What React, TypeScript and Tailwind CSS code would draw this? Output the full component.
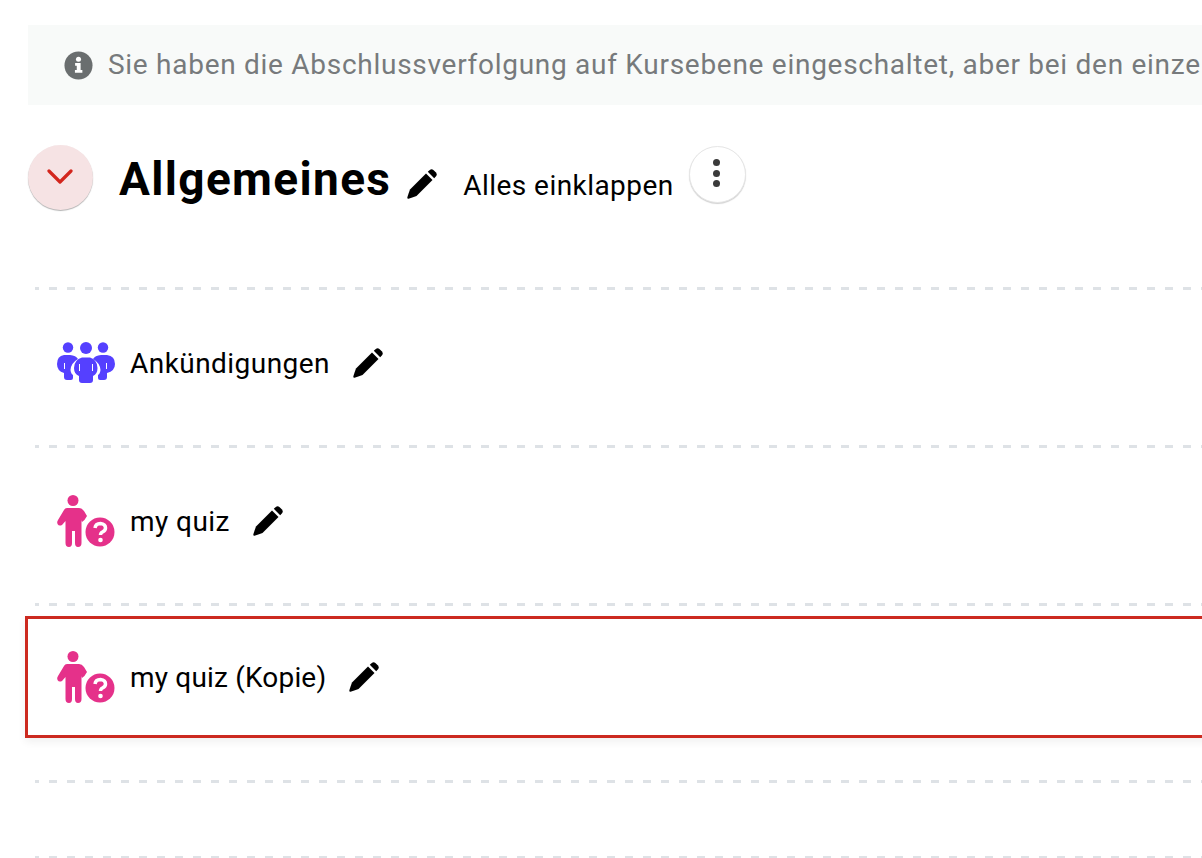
const Pencil = ({ className = "" }: { className?: string }) => (
    <svg viewBox="0 0 30 30" className={`w-[30px] h-[30px] shrink-0 ${className}`} fill="#000">
        <path d="M19 4.500 L25.500 11 L9.500 27 Q5 28.800 1.500 29.800 Q0.200 30 0.300 28.600 Q1.400 24.800 3 20.500 Z" />
        <path d="M20.800 2.800 L22.800 1 Q24.600 -0.300 26.400 1 L29 3.600 Q30.400 5.400 29 7.200 L27.200 9.200 Z" />
    </svg>
)

const GroupIcon = () => (
    <svg viewBox="0 0 60 44" className="w-[60px] h-[44px] shrink-0" fill="#5540ff">
        <circle cx="12" cy="5.500" r="5.200" />
        <circle cx="30" cy="6" r="6" />
        <circle cx="47" cy="5.500" r="5.200" />
        <path d="M8 13 H14 Q20 13.500 22 17 Q15 21 14.500 28 Q15 32 17 33 V36 Q17 38 15 38 H11 Q8 38 8 35 V31 Q1 29 1 22 Q1 14 8 13 Z" />
        <path d="M51 13 H45 Q39 13.500 37 17 Q44 21 44.500 28 Q44 32 42 33 V36 Q42 38 44 38 H48 Q51 38 51 35 V31 Q59 29 59 22 Q59 14 51 13 Z" />
        <path d="M26 15.500 H34 Q41.500 18 41.500 26 Q41.500 32 37 34 V38 Q37 41 34 41 H26 Q23 41 23 38 V34 Q18 32 18 26 Q18 18 26 15.500 Z" />
        <path d="M8.500 21 V27 M23.500 22 V29 M36.500 22 V29 M50.500 21 V27" stroke="#fff" strokeWidth="1" fill="none" />
    </svg>
)

const QuizIcon = () => (
    <svg viewBox="0 0 60 54" className="w-[60px] h-[54px] shrink-0" fill="#e5318a">
        <circle cx="17" cy="5.500" r="5.500" />
        <path d="M11 13 H23 Q26 13 28 16 L31 21 Q29 25 26 27 L25.500 25 V48 Q25.500 52 22 52 Q19 52 19 48 V36 H16 V48 Q16 52 13 52 Q9.500 52 9.500 48 V26 L6 30 Q3 31.500 1.500 29 Q0.500 27 2 25 L8 15 Q9 13 11 13 Z" />
        <circle cx="44" cy="37" r="14.500" />
        <path d="M39 33 Q39.500 28.500 44.500 28.500 Q49.500 29 49.500 33 Q49.500 35.500 46.500 37 Q44.500 38 44.500 40" fill="none" stroke="#fff" strokeWidth="3.500" />
        <circle cx="44.500" cy="45" r="2.300" fill="#fff" />
    </svg>
)

const Dashes = () => (
    <div className="h-[3px] ml-[7px] bg-[repeating-linear-gradient(90deg,#dee2e6_0_4px,transparent_4px_14px,#dee2e6_14px_18px)]" />
)

const App = () => {
    return (
        <div className="w-[1202px] h-[858px] overflow-hidden bg-white pt-[25px] pl-[28px] font-['Roboto',sans-serif] text-[#000]">
            <div className="h-[80px] bg-[#f8faf9] flex items-center pl-[36px] whitespace-nowrap overflow-hidden text-[28px] tracking-[0.72px] text-[#777a7c]">
                <svg viewBox="0 0 30 30" className="w-[29px] h-[29px] mr-[15px] shrink-0">
                    <circle cx="15" cy="15" r="14.500" fill="#6a6e6f" />
                    <circle cx="15" cy="8.500" r="2.600" fill="#fff" />
                    <path d="M11.500 12.500 H17.200 V19.700 H19 V22.500 H11.300 V19.700 H13.200 V15.300 H11.500 Z" fill="#fff" />
                </svg>
                <span>Sie haben die Abschlussverfolgung auf Kursebene eingeschaltet, aber bei den einzel</span>
            </div>

            <div className="mt-[40px] h-[65px] flex items-start">
                <button className="w-[65px] h-[65px] rounded-full bg-[#f6e3e4] shadow-[0_1px_1px_rgba(0,0,0,0.3)] flex items-center justify-center shrink-0">
                    <svg viewBox="0 0 26 16" className="w-[26px] h-[16px] -mt-[1px] -ml-[1px]" fill="none" stroke="#d3261d" strokeWidth="3.200" strokeLinecap="round" strokeLinejoin="round">
                        <path d="M2 2 L13 13 L24 2" />
                    </svg>
                </button>
                <h2 className="ml-[26px] text-[46px] leading-[68px] font-bold tracking-[1.35px]">Allgemeines</h2>
                <Pencil className="ml-[16px] mt-[24px]" />
                <span className="ml-[26px] mt-[21px] text-[28px] leading-[40px] tracking-[0.44px]">Alles einklappen</span>
                <button className="ml-[15px] mt-px w-[57px] h-[57px] rounded-full bg-white border border-[#e6e6e6] shadow-[0_1px_1px_rgba(0,0,0,0.18)] flex flex-col items-center justify-center gap-[3.5px] pb-[3px] pr-[2px] shrink-0">
                    <span className="w-[7px] h-[7px] rounded-full bg-[#3a3a3a]" />
                    <span className="w-[7px] h-[7px] rounded-full bg-[#3a3a3a]" />
                    <span className="w-[7px] h-[7px] rounded-full bg-[#3a3a3a]" />
                </button>
            </div>

            <div className="mt-[77px]">
                <Dashes />
                <div className="h-[155px] flex items-center pl-[28px] pb-[8px] text-[28px] tracking-[0.45px]">
                    <GroupIcon />
                    <span className="ml-[14px]">Ankündigungen</span>
                    <Pencil className="ml-[23px] -mt-[1px]" />
                </div>
                <Dashes />
                <div className="h-[155px] flex items-center pl-[28px] pb-[8px] text-[28px] tracking-[0.45px]">
                    <QuizIcon />
                    <span className="ml-[14px]">my quiz</span>
                    <Pencil className="ml-[23px] -mt-[1px]" />
                </div>
                <Dashes />
                <div className="mt-[10px] -ml-[3px] w-[1300px] h-[122px] border-[3px] border-[#cc2a20] shadow-[0_4px_8px_rgba(0,0,0,0.06)] flex items-center pl-[28px] pt-[1px] text-[28px] tracking-[0.18px]">
                    <QuizIcon />
                    <span className="ml-[14px]">my quiz (Kopie)</span>
                    <Pencil className="ml-[23px] -mt-[2px]" />
                </div>
                <div className="h-[42px]" />
                <Dashes />
                <div className="h-[73px]" />
                <Dashes />
            </div>
        </div>
    )
}

export default App
